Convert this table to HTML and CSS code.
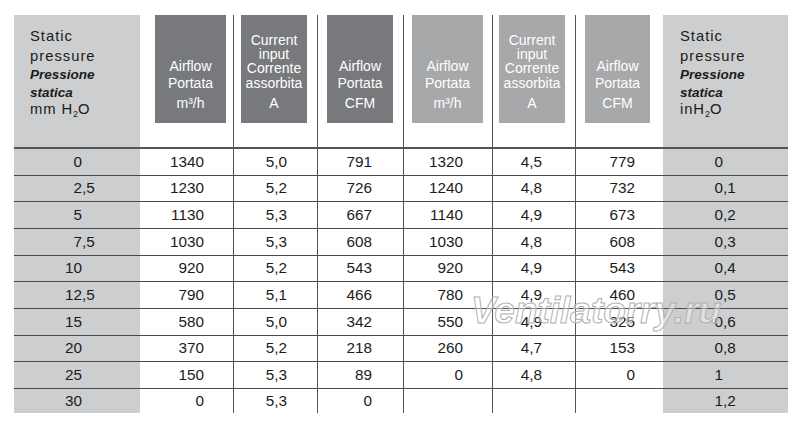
FILE: index.html
```html
<!DOCTYPE html>
<html>
<head>
<meta charset="utf-8">
<link rel="stylesheet" href="styles.css">
</head>
<body>
<div class="sheet">
  <div class="grid">
    <div class="cell head side c1"><div class="sp">
      <span class="l-reg">Static</span><span class="l-reg">pressure</span><span class="l-it">Pressione</span><span class="l-it l-it2">statica</span><span class="l-unit">mm H<sub>2</sub>O</span>
    </div></div>
    <div class="cell head c2"><div class="box dark hb2"><div class="name">Airflow<br>Portata</div><div class="unit">m³/h</div></div></div>
    <div class="cell head c3"><div class="box dark w66 hb3"><div class="name tight">Current<br>input<br>Corrente<br>assorbita</div><div class="unit">A</div></div></div>
    <div class="cell head c4"><div class="box dark w66 hb4"><div class="name">Airflow<br>Portata</div><div class="unit">CFM</div></div></div>
    <div class="cell head c5"><div class="box light hb5"><div class="name">Airflow<br>Portata</div><div class="unit">m³/h</div></div></div>
    <div class="cell head c6"><div class="box light w66 hb6"><div class="name tight">Current<br>input<br>Corrente<br>assorbita</div><div class="unit">A</div></div></div>
    <div class="cell head c7"><div class="box light w65 hb7"><div class="name">Airflow<br>Portata</div><div class="unit">CFM</div></div></div>
    <div class="cell head side c8"><div class="sp sp8">
      <span class="l-reg">Static</span><span class="l-reg">pressure</span><span class="l-it">Pressione</span><span class="l-it l-it2">statica</span><span class="l-unit">inH<sub>2</sub>O</span>
    </div></div>

    <div class="cell side c1"><span class="int">0</span></div><div class="cell c2">1340</div><div class="cell c3">5,0</div><div class="cell c4">791</div><div class="cell c5">1320</div><div class="cell c6">4,5</div><div class="cell c7">779</div><div class="cell side c8"><span class="int">0</span></div>
    <div class="cell side c1"><span class="int">2</span>,5</div><div class="cell c2">1230</div><div class="cell c3">5,2</div><div class="cell c4">726</div><div class="cell c5">1240</div><div class="cell c6">4,8</div><div class="cell c7">732</div><div class="cell side c8"><span class="int">0</span>,1</div>
    <div class="cell side c1"><span class="int">5</span></div><div class="cell c2">1130</div><div class="cell c3">5,3</div><div class="cell c4">667</div><div class="cell c5">1140</div><div class="cell c6">4,9</div><div class="cell c7">673</div><div class="cell side c8"><span class="int">0</span>,2</div>
    <div class="cell side c1"><span class="int">7</span>,5</div><div class="cell c2">1030</div><div class="cell c3">5,3</div><div class="cell c4">608</div><div class="cell c5">1030</div><div class="cell c6">4,8</div><div class="cell c7">608</div><div class="cell side c8"><span class="int">0</span>,3</div>
    <div class="cell side c1"><span class="int">10</span></div><div class="cell c2">920</div><div class="cell c3">5,2</div><div class="cell c4">543</div><div class="cell c5">920</div><div class="cell c6">4,9</div><div class="cell c7">543</div><div class="cell side c8"><span class="int">0</span>,4</div>
    <div class="cell side c1"><span class="int">12</span>,5</div><div class="cell c2">790</div><div class="cell c3">5,1</div><div class="cell c4">466</div><div class="cell c5">780</div><div class="cell c6">4,9</div><div class="cell c7">460</div><div class="cell side c8"><span class="int">0</span>,5</div>
    <div class="cell side c1"><span class="int">15</span></div><div class="cell c2">580</div><div class="cell c3">5,0</div><div class="cell c4">342</div><div class="cell c5">550</div><div class="cell c6">4,9</div><div class="cell c7">325</div><div class="cell side c8"><span class="int">0</span>,6</div>
    <div class="cell side c1"><span class="int">20</span></div><div class="cell c2">370</div><div class="cell c3">5,2</div><div class="cell c4">218</div><div class="cell c5">260</div><div class="cell c6">4,7</div><div class="cell c7">153</div><div class="cell side c8"><span class="int">0</span>,8</div>
    <div class="cell side c1"><span class="int">25</span></div><div class="cell c2">150</div><div class="cell c3">5,3</div><div class="cell c4">89</div><div class="cell c5">0</div><div class="cell c6">4,8</div><div class="cell c7">0</div><div class="cell side c8"><span class="int">1</span></div>
    <div class="cell last side c1"><span class="int">30</span></div><div class="cell last c2">0</div><div class="cell last c3">5,3</div><div class="cell last c4">0</div><div class="cell last c5"></div><div class="cell last c6"></div><div class="cell last c7"></div><div class="cell last side c8"><span class="int">1</span>,2</div>
  </div>
  <div class="watermark">Ventilatorry.ru</div>
</div>
</body>
</html>
```

FILE: styles.css
```css
* { box-sizing: border-box; }
html, body { margin: 0; padding: 0; background: #fff; }
body {
  font-family: "Liberation Sans", Arial, sans-serif;
  color: #1b1b1b;
  width: 800px;
  height: 428px;
  overflow: hidden;
}
.sheet { position: relative; padding: 15px 0 0 14px; }
.grid {
  display: grid;
  grid-template-columns: 126px 93px 84px 86px 89px 83px 88px 125px;
  grid-template-rows: 134px repeat(9, 26.67px) 24.33px;
}
.cell {
  display: flex;
  align-items: center;
  font-size: 15.3px;
  border-bottom: 1px solid #4a4a4a;
  white-space: nowrap;
}
.cell.last { border-bottom: none; }
.side { background: #cdcecf; }
.c3, .c4, .c5, .c6, .c7 { border-left: 1px solid #555; }
.c2, .c3, .c4, .c5, .c6, .c7 { justify-content: flex-end; }
.c1 { padding-left: 28px; }
.c2 { padding-right: 29px; }
.c3 { padding-right: 30px; }
.c4 { padding-right: 31px; }
.c5 { padding-right: 29px; }
.c6 { padding-right: 33px; }
.c7 { padding-right: 28px; }
.c8 { padding-left: 20px; }
.int { display: inline-block; width: 40px; text-align: right; }

.head {
  border-bottom: 2px solid #555;
  align-items: flex-start;
  justify-content: flex-start;
  padding: 0;
}
.sp { padding: 11px 0 0 16px; }
.sp8 { padding-left: 17px; }
.l-reg { display: block; font-size: 14.8px; letter-spacing: 1px; line-height: 20px; }
.l-it { display: block; font-size: 13.5px; font-weight: bold; font-style: italic; line-height: 18px; }
.l-it2 { line-height: 17px; }
.l-unit { display: block; font-size: 14.8px; letter-spacing: 0.9px; line-height: 17px; }
sub { font-size: 9px; line-height: 0; vertical-align: -3px; letter-spacing: 0; }

.box {
  width: 71px;
  height: 108px;
  display: flex;
  flex-direction: column;
  justify-content: flex-end;
  align-items: center;
  text-align: center;
  color: #fff;
  font-size: 14px;
  padding-bottom: 12px;
}
.dark { background: #77797c; }
.light { background: #a7a8aa; }
.w66 { width: 66px; }
.w65 { width: 65px; }
.hb2 { margin-left: 15px; }
.hb3 { margin-left: 7px; }
.hb4 { margin-left: 9px; }
.hb5 { margin-left: 8px; }
.hb6 { margin-left: 6px; }
.hb7 { margin-left: 9px; }
.name { line-height: 16.5px; }
.name.tight { line-height: 14.3px; }
.unit { line-height: 16px; margin-top: 4px; }
.name.tight + .unit { margin-top: 5px; }

.watermark {
  position: absolute;
  left: 471px;
  top: 292px;
  font-size: 37px;
  font-weight: bold;
  font-style: italic;
  line-height: 1;
  color: rgba(255, 255, 255, 0.4);
  -webkit-text-stroke: 1px #b0b0b0;
  white-space: nowrap;
  pointer-events: none;
}
```
